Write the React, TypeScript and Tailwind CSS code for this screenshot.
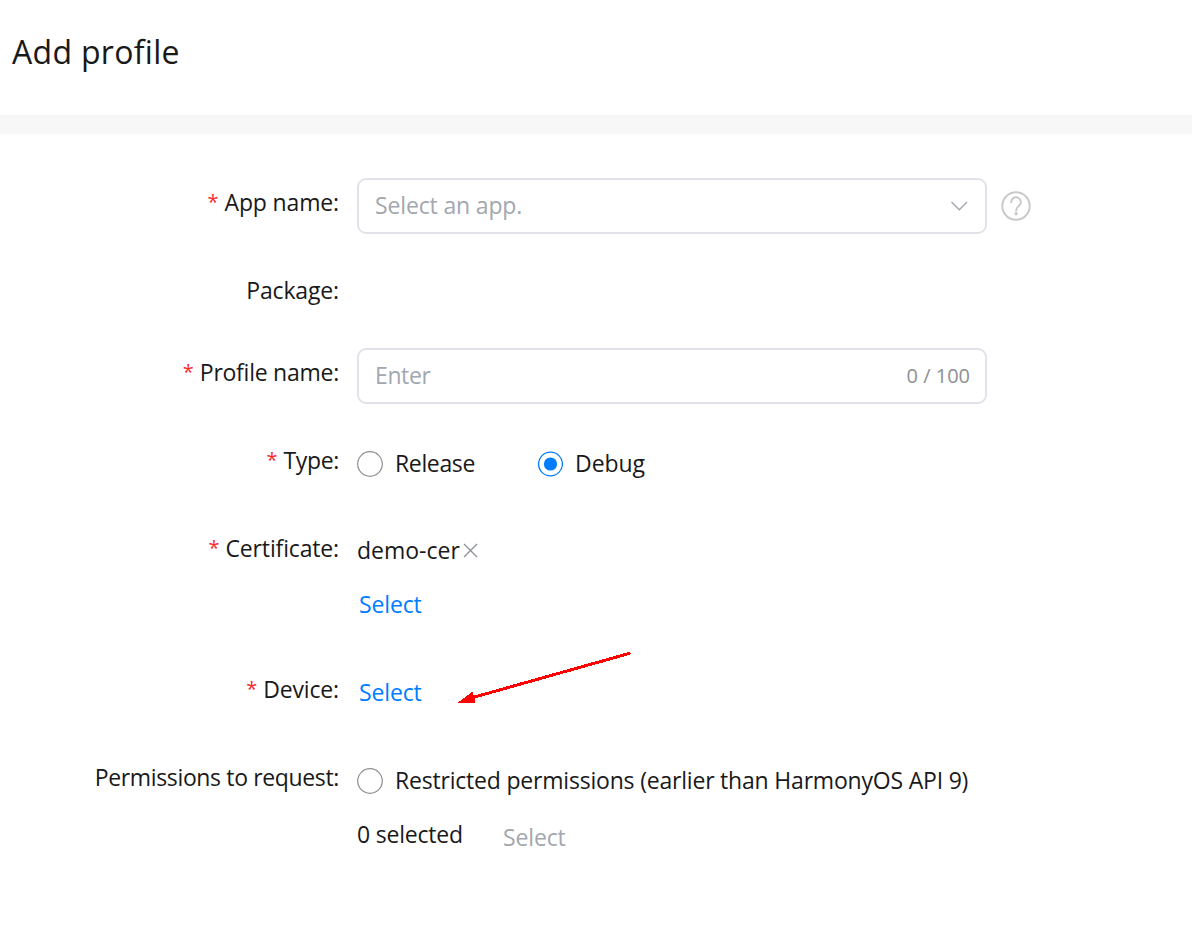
import type { ReactNode } from 'react';

function Row({ label, required, height, children }: { label: ReactNode; required?: boolean; height: string; children?: ReactNode }) {
  return (
    <div className={`flex ${height}`}>
      <div className="flex w-[339px] shrink-0 justify-end whitespace-nowrap leading-[48px]">
        {required && <span className="mr-[6px] text-[20px] text-[#fa2a2d]">*</span>}
        {label}
      </div>
      <div className="ml-[18px] flex flex-col">{children}</div>
    </div>
  );
}

function Radio({ checked, children, className = '' }: { checked?: boolean; children: ReactNode; className?: string }) {
  return (
    <label className={`flex h-[54px] items-center whitespace-nowrap leading-[54px] ${className}`}>
      <svg width="26" height="26" viewBox="0 0 26 26" className="mb-px mr-[12px] mt-[2px] shrink-0" fill="none">
        {checked ? (
          <>
            <circle cx="13.5" cy="13" r="11.9" stroke="#007dff" strokeWidth="1.3" />
            <circle cx="13.5" cy="13" r="6.6" fill="#007dff" />
          </>
        ) : (
          <circle cx="13" cy="13" r="12.3" stroke="#8d9094" strokeWidth="1.2" />
        )}
      </svg>
      {children}
    </label>
  );
}

export default function App() {
  return (
    <div className="relative h-[951px] w-[1192px] overflow-hidden bg-white font-['Open_Sans',sans-serif] text-[23px] text-[#191919]">
      <header className="h-[115px] pl-[12px] pt-[28px]">
        <h1 className="text-[32px] leading-[48px] tracking-[0.3px]">Add profile</h1>
      </header>
      <div className="h-[19px] bg-[#f7f7f7]" />
      <main className="pt-11">
        <Row label={<span className="tracking-[-0.15px]">App name:</span>} required height="h-[88px]">
          <div className="flex items-center">
            <div className="flex h-14 w-[630px] items-center rounded-[9px] border-2 border-[#e2e3ea] pl-[16px] pr-[17px] text-[#a3a7b0]">
              <span className="grow pb-[2px] leading-[50px] tracking-[-0.15px]">Select an app.</span>
              <svg width="18" height="10" viewBox="0 0 18 10" fill="none" stroke="#a3a7b0" strokeWidth="1.4">
                <path d="M1.5 1 9.3 8.8 17 1" />
              </svg>
            </div>
            <svg width="30" height="30" viewBox="0 0 30 30" fill="none" stroke="#c9c9c9" strokeWidth="2" className="ml-[14px]">
              <circle cx="15" cy="15" r="13.7" />
              <path d="M10.2 11.2a4.8 4.8 0 1 1 8.1 3.3c-1.9 1.9-3.2 2.6-3.2 5.2" strokeLinecap="round" />
              <circle cx="15.1" cy="22.8" r="1.7" fill="#c9c9c9" stroke="none" />
            </svg>
          </div>
        </Row>
        <Row label={<span className="tracking-[-0.15px]">Package:</span>} height="h-[82px]" />
        <Row label={<span className="tracking-[-0.25px]">Profile name:</span>} required height="h-[88px]">
          <div className="flex h-14 w-[630px] items-center rounded-[9px] border-2 border-[#e2e3ea] pl-[16px] pr-[15px] text-[#a3a7b0]">
            <span className="grow pb-[2px] leading-[50px] tracking-[-0.4px]">Enter</span>
            <span className="text-[20px] leading-[50px] text-[#8d9094]">0 / 100</span>
          </div>
        </Row>
        <Row label={<span className="tracking-[-0.35px]">Type:</span>} required height="h-[88px]">
          <div className="flex">
            <Radio className="w-[180px]"><span className="tracking-[-0.35px]">Release</span></Radio>
            <Radio checked><span className="tracking-[-0.05px]">Debug</span></Radio>
          </div>
        </Row>
        <Row label={<span className="tracking-[-0.15px]">Certificate:</span>} required height="h-[141px]">
          <div className="flex items-center leading-[52px]">
            <span>demo-cer</span>
            <svg width="15" height="15" viewBox="0 0 15 15" fill="none" stroke="#8d9094" strokeWidth="1.3" className="ml-[3px] mt-px">
              <path d="M1 1 14 14M14 1 1 14" />
            </svg>
          </div>
          <a className="ml-[2px] leading-[56px] tracking-[-0.15px] text-[#007dff]">Select</a>
        </Row>
        <Row label={<span className="tracking-[-0.15px]">Device:</span>} required height="h-[88px]">
          <a className="ml-[2px] leading-[54px] tracking-[-0.15px] text-[#007dff]">Select</a>
        </Row>
        <Row label={<span className="tracking-[-0.36px]">Permissions to request:</span>} height="h-[130px]">
          <Radio><span className="tracking-[-0.2px]">Restricted permissions (earlier than HarmonyOS API 9)</span></Radio>
          <div className="flex whitespace-nowrap leading-[54px]">
            <span className="w-[145px] tracking-[-0.2px]">0 selected</span>
            <span className="ml-px leading-[60px] tracking-[-0.15px] text-[#a3a7b0]">Select</span>
          </div>
        </Row>
      </main>
      <svg width="180" height="60" viewBox="0 0 180 60" className="pointer-events-none absolute left-[455px] top-[648px]" shapeRendering="crispEdges">
        <path d="M16 50 174 5.5" stroke="#ff0000" strokeWidth="3" strokeLinecap="round" />
        <path d="M2.4 55 17.6 43.6 20.5 55Z" fill="#ff0000" />
      </svg>
    </div>
  );
}
